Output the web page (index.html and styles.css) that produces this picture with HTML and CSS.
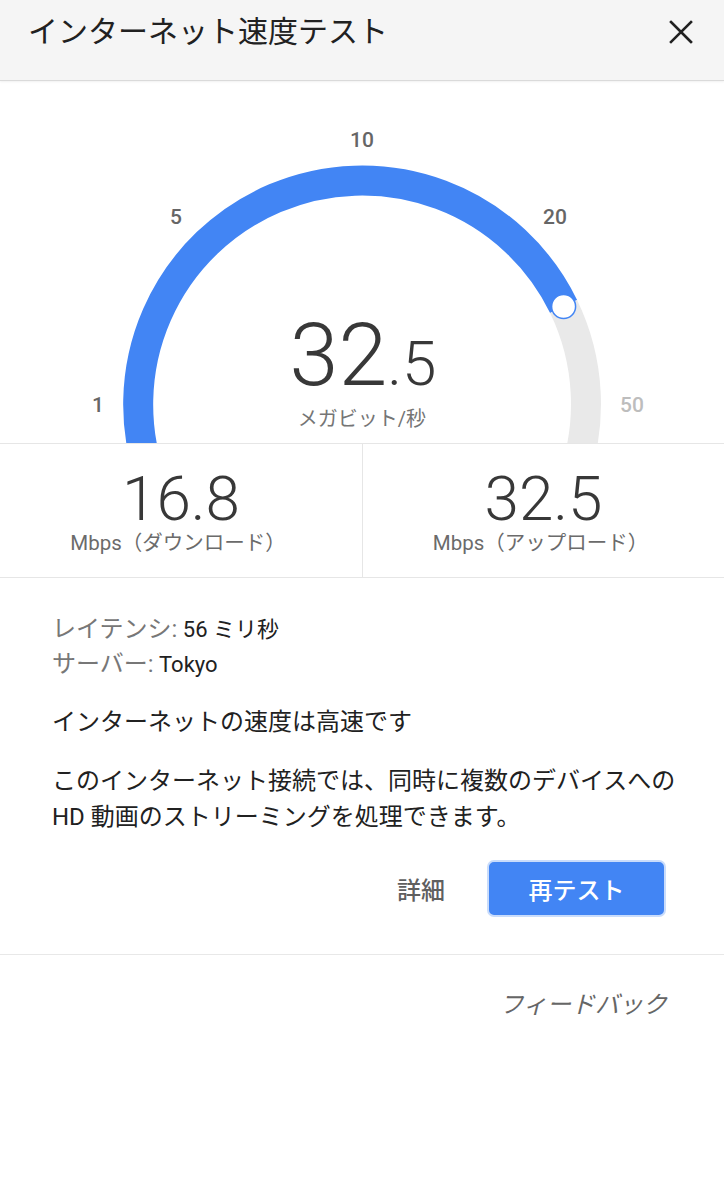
FILE: index.html
```html
<!DOCTYPE html>
<html lang="ja">
<head>
    <meta charset="UTF-8">
    <meta name="viewport" content="width=device-width, initial-scale=1.0">
    <title>インターネット速度テスト</title>
    <link rel="stylesheet" href="styles.css">
</head>
<body>
    <header class="top-bar">
        <h1 class="title">インターネット速度テスト</h1>
        <button class="close-btn" aria-label="閉じる">
            <svg width="26" height="26" viewBox="0 0 26 26">
                <path d="M3 3 L23 23 M23 3 L3 23" stroke="#212121" stroke-width="2.6" stroke-linecap="square"/>
            </svg>
        </button>
    </header>

    <section class="gauge">
        <svg class="gauge-svg" width="724" height="362" viewBox="0 0 724 362">
            <path d="M151.5 399.6 A224 224 0 0 1 563.6 225.5" fill="none" stroke="#4285f4" stroke-width="30"/>
            <path d="M563.6 225.5 A224 224 0 0 1 572.5 399.6" fill="none" stroke="#e9e9e9" stroke-width="30"/>
            <circle cx="563.6" cy="225.5" r="12" fill="#fff" stroke="#4285f4" stroke-width="1.5"/>

            <text class="tick" x="98" y="324">1</text>
            <text class="tick" x="176" y="136">5</text>
            <text class="tick" x="362" y="59">10</text>
            <text class="tick" x="555" y="136">20</text>
            <text class="tick tick-off" x="632" y="324">50</text>

            <text class="reading" x="363" y="304">32<tspan class="reading-dec">.5</tspan></text>
            <text class="unit" x="362" y="345">メガビット/秒</text>
        </svg>
    </section>

    <section class="stats">
        <div class="stat">
            <div class="stat-num">16.8</div>
            <div class="stat-label">Mbps（ダウンロード）</div>
        </div>
        <div class="stat">
            <div class="stat-num">32.5</div>
            <div class="stat-label">Mbps（アップロード）</div>
        </div>
    </section>

    <section class="info">
        <div class="meta"><span class="meta-key">レイテンシ:</span> 56 ミリ秒</div>
        <div class="meta"><span class="meta-key">サーバー:</span> Tokyo</div>
        <p class="verdict">インターネットの速度は高速です</p>
        <p class="desc">このインターネット接続では、同時に複数のデバイスへのHD 動画のストリーミングを処理できます。</p>
        <div class="actions">
            <button class="link-btn">詳細</button>
            <button class="primary-btn">再テスト</button>
        </div>
    </section>

    <footer class="feedback">
        <span class="feedback-link">フィードバック</span>
    </footer>
</body>
</html>
```

FILE: styles.css
```css
body {
    margin: 0;
    font-family: Roboto, "Noto Sans CJK JP", sans-serif;
    background-color: #fff;
    color: #212121;
}

.top-bar {
    box-sizing: border-box;
    height: 81px;
    background-color: #f5f5f5;
    border-bottom: 1px solid #dadada;
    box-shadow: 0 1px 2px rgba(0, 0, 0, 0.06);
    display: flex;
    align-items: flex-start;
    justify-content: space-between;
    padding: 13px 30px 0 28px;
}

.title {
    margin: 0;
    font-size: 30px;
    font-weight: 400;
    line-height: 38px;
    color: #212121;
}

.close-btn {
    background: none;
    border: none;
    padding: 0;
    margin-top: 6px;
    width: 26px;
    height: 26px;
}

.gauge {
    height: 362px;
    overflow: hidden;
    border-bottom: 1px solid #e6e6e6;
}

.gauge-svg {
    display: block;
}

.tick {
    font-family: Roboto, sans-serif;
    font-size: 21px;
    font-weight: 500;
    fill: #666;
    text-anchor: middle;
    dominant-baseline: central;
}

.tick-off {
    fill: #bdbdbd;
}

.reading {
    font-family: Roboto, sans-serif;
    font-size: 88px;
    font-weight: 300;
    fill: #383838;
    text-anchor: middle;
}

.reading-dec {
    font-size: 62px;
}

.unit {
    font-size: 20px;
    fill: #757575;
    text-anchor: middle;
}

.stats {
    display: grid;
    grid-template-columns: 1fr 1fr;
    height: 133px;
    border-bottom: 1px solid #e6e6e6;
}

.stat {
    display: flex;
    flex-direction: column;
    align-items: center;
    padding-top: 22px;
}

.stat + .stat {
    border-left: 1px solid #e6e6e6;
}

.stat-num {
    font-size: 62px;
    font-weight: 300;
    line-height: 66px;
    color: #383838;
}

.stat-label {
    font-size: 20.5px;
    line-height: 22px;
    color: #6b6b6b;
    margin-left: -6px;
}

.info {
    padding: 34px 40px 0 52px;
    border-bottom: 1px solid #e8e8e8;
}

.meta {
    font-size: 22px;
    line-height: 34px;
    color: #212121;
}

.meta-key {
    color: #777;
    font-size: 24px;
}

.verdict {
    margin: 23px 0 0;
    font-size: 24px;
    line-height: 34px;
}

.desc {
    margin: 24px 0 0;
    font-size: 24px;
    line-height: 36px;
}

.actions {
    display: flex;
    justify-content: flex-end;
    align-items: center;
    gap: 42px;
    margin: 25px 18px 0 0;
    padding-bottom: 37px;
}

.link-btn {
    background: none;
    border: none;
    padding: 0;
    font-family: inherit;
    font-size: 24px;
    font-weight: 500;
    color: #5f5f5f;
}

.primary-btn {
    width: 179px;
    height: 57px;
    background-color: #4285f4;
    border: 2px solid #c9dcfb;
    border-radius: 7px;
    color: #fff;
    font-family: inherit;
    font-size: 24px;
    font-weight: 500;
}

.feedback {
    display: flex;
    justify-content: flex-end;
    padding: 33px 57px 0 0;
}

.feedback-link {
    font-size: 24px;
    font-style: italic;
    line-height: 34px;
    color: #666;
}
```
